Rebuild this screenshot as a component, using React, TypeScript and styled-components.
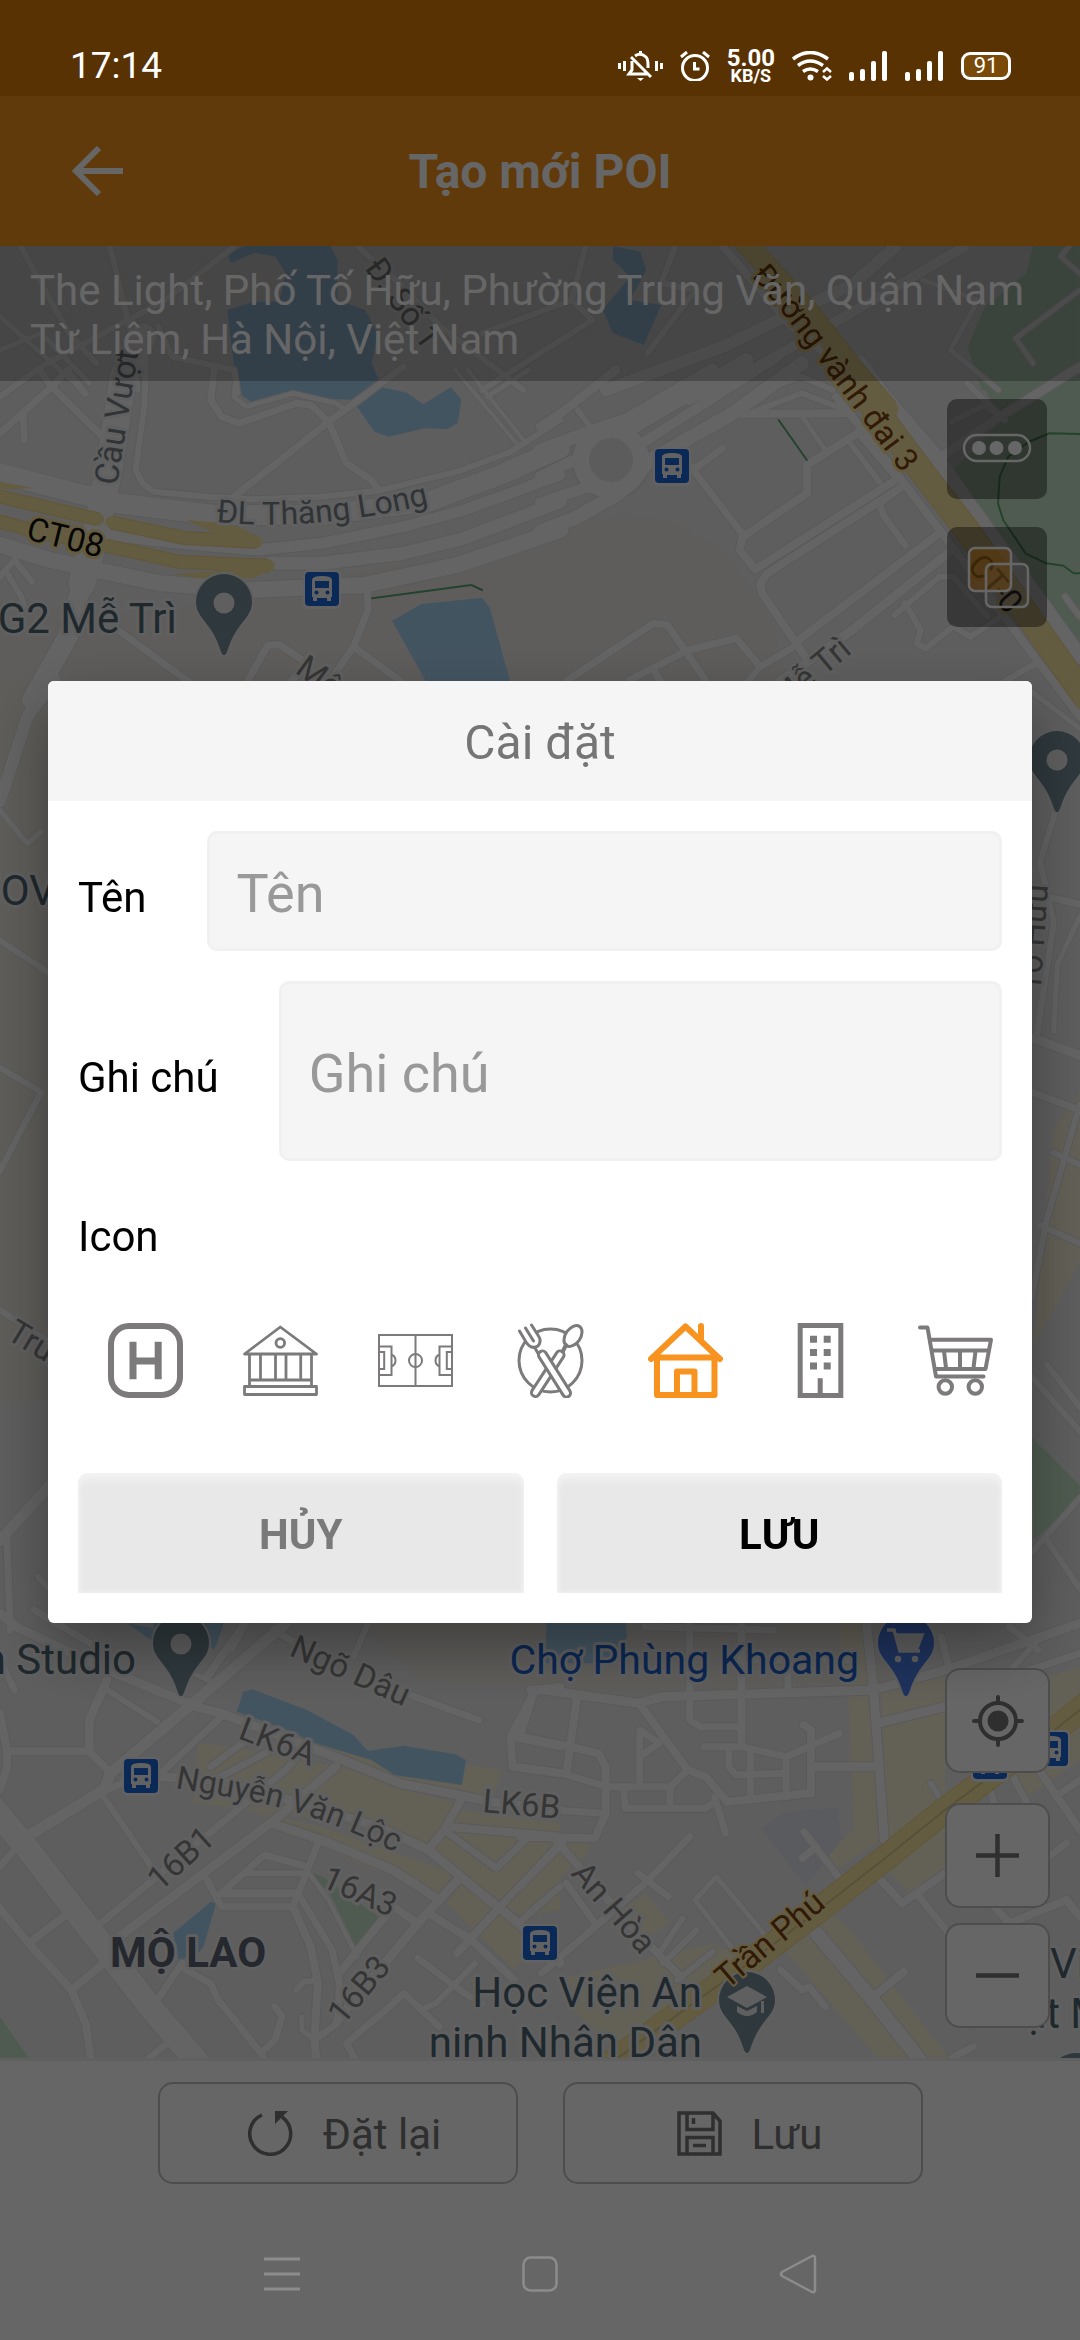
import React, { useState } from "react";
import styled, { createGlobalStyle } from "styled-components";

const GlobalStyle = createGlobalStyle`
  *, *::before, *::after { box-sizing: border-box; }
  body { margin: 0; background: #666; }
  body, button, input { font-family: Roboto, "Noto Sans", sans-serif; }
  button { margin: 0; padding: 0; border: 0; background: none; cursor: pointer; }
`;

const Page = styled.div`
  display: flex;
  flex-direction: column;
  min-height: 100vh;
`;

/* ---------- system status bar ---------- */

const StatusBar = styled.div`
  position: relative;
  z-index: 2;
  display: flex;
  justify-content: space-between;
  align-items: flex-end;
  height: 96px;
  padding: 0 69px 10px 70px;
  background: #593204;
  color: #fff;
`;

const Clock = styled.time`
  font-size: 37px;
  line-height: 40px;
`;

const StatusIcons = styled.div`
  display: flex;
  align-items: center;
  gap: 17px;
  height: 40px;
`;

const Speed = styled.div`
  display: flex;
  flex-direction: column;
  align-items: center;
  font-weight: 700;
  font-size: 24px;
  line-height: 20px;
`;

const SpeedUnit = styled.span`
  font-size: 18px;
  line-height: 16px;
`;

const Battery = styled.div`
  display: grid;
  place-items: center;
  width: 50px;
  height: 28px;
  border: 3px solid #fff;
  border-radius: 9px;
  background: #7a4a08;
  font-size: 22px;
  line-height: 22px;
`;

/* ---------- app bar ---------- */

const AppBar = styled.header`
  display: grid;
  grid-template-columns: 1fr auto 1fr;
  align-items: center;
  height: 150px;
  padding: 0 72px;
  background: #f0921a;
  color: #fff;
`;

const BackButton = styled.button`
  justify-self: start;
  display: flex;
  color: inherit;
`;

const Title = styled.h1`
  margin: 0;
  padding-top: 2px;
  font-size: 48px;
  line-height: 56px;
  font-weight: 700;
`;

/* ---------- map ---------- */

const MapArea = styled.main`
  position: relative;
  flex: 1;
  min-height: 1400px;
  overflow: hidden;
  background: #ececec;
`;

const MapCanvas = styled.svg`
  position: absolute;
  inset: 0;
  width: 100%;
  height: 100%;
`;

const Address = styled.p`
  position: relative;
  margin: 0;
  padding: 20px 30px 17px;
  background: rgba(0, 0, 0, 0.25);
  color: #fff;
  font-size: 42px;
  line-height: 49px;
`;

const MapTools = styled.div`
  position: absolute;
  top: 153px;
  right: 33px;
  display: flex;
  flex-direction: column;
  gap: 28px;
`;

const ToolButton = styled.button`
  display: flex;
  width: 100px;
  height: 100px;
  border-radius: 10px;
  background: rgba(0, 0, 0, 0.4);
`;

const MapControls = styled.div`
  position: absolute;
  right: 30px;
  bottom: 30px;
  display: flex;
  flex-direction: column;
  gap: 30px;
`;

const ZoomGroup = styled.div`
  display: flex;
  flex-direction: column;
  gap: 15px;
`;

const ControlButton = styled.button`
  display: grid;
  place-items: center;
  width: 105px;
  height: 105px;
  border: 2px solid #c0c0c0;
  border-radius: 15px;
  background: #fff;
  color: #757575;
`;

/* ---------- bottom bars ---------- */

const ActionBar = styled.footer`
  display: flex;
  justify-content: center;
  gap: 45px;
  padding: 21px 48px 24px;
  border-top: 3px solid #f0f0f0;
  background: #fff;
`;

const ActionButton = styled.button`
  display: flex;
  flex: 0 1 360px;
  justify-content: center;
  align-items: center;
  gap: 30px;
  height: 102px;
  padding-left: 14px;
  border: 2px solid #c0c0c0;
  border-radius: 15px;
  color: #757575;
  font-size: 42px;
  line-height: 50px;
`;

const ActionText = styled.span`
  padding-top: 3px;
`;

const NavBar = styled.nav`
  position: relative;
  z-index: 2;
  display: flex;
  justify-content: center;
  gap: 138px;
  height: 132px;
  background: #666;
  color: #8c8c8c;
`;

const NavButton = styled.button`
  display: grid;
  place-items: center;
  width: 120px;
  color: inherit;
`;

/* ---------- dialog ---------- */

const Backdrop = styled.div`
  position: fixed;
  inset: 0;
  z-index: 1;
  display: flex;
  align-items: center;
  padding: 96px 48px 132px;
  background: rgba(0, 0, 0, 0.6);
`;

const Dialog = styled.section`
  flex: 1;
  min-width: 0;
  overflow: hidden;
  border-radius: 6px;
  background: #fff;
  box-shadow: 0 24px 60px rgba(0, 0, 0, 0.35);
`;

const DialogTitle = styled.h2`
  margin: 0;
  padding: 34px 0 30px;
  background: #f5f5f5;
  color: #757575;
  font-size: 48px;
  line-height: 56px;
  font-weight: 400;
  text-align: center;
`;

const Form = styled.form`
  display: flex;
  flex-direction: column;
  gap: 30px;
  padding: 30px;
`;

const Field = styled.div`
  display: flex;
  align-items: baseline;
  gap: 60px;
`;

const FieldLabel = styled.label`
  color: #000;
  font-size: 42px;
  line-height: 50px;
`;

const TextInput = styled.input<{ $tall?: boolean }>`
  flex: 1;
  min-width: 0;
  height: ${(p) => (p.$tall ? 180 : 120)}px;
  padding: 4px 27px 0;
  border: 3px solid #f1f1f1;
  border-radius: 10px;
  outline: none;
  background: #f5f5f5;
  color: #333;
  font-size: 54px;
  &::placeholder { color: #999; opacity: 1; }
`;

const IconSection = styled.div`
  display: flex;
  flex-direction: column;
  gap: 31px;
  padding: 21px 0 15px;
`;

const IconHeading = styled.span`
  color: #000;
  font-size: 42px;
  line-height: 50px;
`;

const IconRow = styled.div`
  display: flex;
  overflow-x: auto;
  scrollbar-width: none;
`;

const IconOption = styled.label<{ $active: boolean }>`
  position: relative;
  flex: none;
  display: flex;
  padding: 30px;
  color: ${(p) => (p.$active ? "#f7931e" : "#7c7a7b")};
  cursor: pointer;
`;

const HiddenRadio = styled.input`
  position: absolute;
  inset: 0;
  width: 100%;
  height: 100%;
  margin: 0;
  opacity: 0;
`;

const DialogActions = styled.div`
  display: flex;
  gap: 33px;
`;

const DialogButton = styled.button<{ $primary?: boolean }>`
  flex: 1;
  height: 120px;
  padding-top: 2px;
  border-radius: 10px 10px 0 0;
  background: #e8e8e8;
  box-shadow: inset 0 8px 8px -2px #f3f3f3, inset 0 0 5px #f6f6f6;
  color: ${(p) => (p.$primary ? "#000" : "#7a7a7a")};
  font-size: 42px;
  font-weight: 700;
`;

/* ---------- map drawing ---------- */

type Tile = [number, number, number, number];
const NORTH: Tile = [0, 0, 1.452, 3];
const NW: Tile = [0, 370, 2.8, 3];
const NE: Tile = [540, 370, 2.904, 3];
const MID: Tile = [0, 680, 1.452, 1.6505];
const SW: Tile = [0, 1610, 2.8, 3];
const SE: Tile = [520, 1610, 2.8, 3];

const place = ([ox, oy, sx, sy]: Tile, pts: string) =>
  pts
    .split(" ")
    .map((p) => {
      const [x, y] = p.split(",").map(Number);
      return `${(ox + x / sx).toFixed(1)},${(oy + y / sy).toFixed(1)}`;
    })
    .join(" ");

type Shape = [Tile, string];
const water: Shape[] = [
  [NORTH, "355,738 480,738 490,780 490,900 530,930 548,1000 540,1090 550,1140 545,1165 520,1200 470,1197 430,1173 365,1205 345,1180 335,1020 330,930 370,905 405,905 415,820 400,770 370,758 335,790 330,760"],
  [NORTH, "890,738 930,755 938,810 915,900 960,915 935,1035 890,1000 875,930 915,830 890,780"],
  [NW, "1000,110 1070,52 1140,68 1185,103 1262,52 1292,88 1282,158 1252,178 1190,175 1088,200 1048,185"],
  [NW, "1098,752 1180,702 1350,683 1372,715 1430,940 1195,940"],
  [SW, "680,247 705,238 860,300 990,375 1030,423 1130,407 1275,433 1305,450 1293,525 1105,495 1040,450 860,392 830,370 663,305"],
  [SW, "355,40 430,95 430,30 630,30 600,120 560,80"],
  [SW, "485,970 590,875 605,880 570,1010 545,1040 500,1048"],
  [SE, "75,30 295,30 300,80 250,160 70,160"],
];
const parks: Shape[] = [
  [NORTH, "1500,738 1568,738 1568,1170 1425,1170 1405,1040 1430,920 1490,820"],
  [NORTH, "475,910 500,945 520,930 538,950 530,1000 490,1080 470,1000"],
  [NE, "1262,0 1568,0 1568,840 1200,300 1340,150"],
  [MID, "1498,1250 1568,1330 1568,1350 1500,1420"],
  [SW, "870,787 905,800 1060,920 1085,890 1000,1020 930,860"],
  [SW, "0,1220 80,1343 0,1343"],
];
const beige: Shape[] = [
  [SW, "555,400 650,410 830,450 960,470 1130,540 1290,580 1200,700 1000,640 540,580"],
  [SW, "860,392 1040,450 1105,495 1293,525 1305,465 1405,480 1380,560 1100,520 900,440"],
  [SW, "700,600 900,650 1270,790 1230,850 1000,760 800,650"],
  [SW, "1290,600 1568,640 1568,900 1460,920 1300,790 1200,720"],
  [SW, "1250,880 1300,810 1500,1000 1440,1080"],
  [SE, "890,40 960,40 1000,220 1010,690 860,800 870,720 935,660 920,260"],
  [SE, "1010,240 1190,200 1190,560 1030,690"],
  [SE, "1030,780 1190,650 1190,770 1090,850"],
  [SE, "740,1020 870,900 940,980 1200,1343 1000,1343"],
  [SE, "1480,200 1568,170 1568,450 1420,560 1380,500"],
  [SE, "0,700 200,700 180,740 0,900"],
  [SE, "280,900 350,850 420,940 360,980"],
  [SE, "100,1110 540,1000 640,1050 280,1330 150,1200"],
  [MID, "1530,740 1568,680 1568,960 1500,1100"],
];

type Road = [Tile, number, string];
const roads: Road[] = [
  [NORTH, 6, "30,740 100,1000 140,1090"], [NORTH, 6, "160,740 190,1000 200,1170"],
  [NORTH, 5, "0,950 120,1170"], [NORTH, 5, "0,1050 60,1000 130,1150"],
  [NORTH, 6, "340,740 240,900 60,1100 0,1190"], [NORTH, 6, "230,980 250,1070 340,1110 345,1180"],
  [NORTH, 6, "520,740 580,850 640,980 760,1170"], [NORTH, 6, "850,740 830,900 700,1000"],
  [NORTH, 6, "830,900 860,960 700,1170"], [NORTH, 6, "980,740 960,850 1010,870 940,1060"],
  [NORTH, 12, "1300,740 1240,850 1050,1040 880,1170"], [NORTH, 10, "1400,740 1310,850 1100,1100 1000,1200"],
  [NORTH, 8, "1050,740 1150,980 1300,1230"], [NORTH, 5, "1340,840 1420,900 1380,1050 1450,1170"],
  [NORTH, 5, "1568,700 1540,770 1568,820"], [NORTH, 5, "1568,870 1475,1015 1500,1090"],
  [NW, 7, "0,190 145,50 190,0"], [NW, 7, "145,50 330,245"], [NW, 7, "65,130 68,210"],
  [NW, 7, "145,50 110,0"], [NW, 7, "190,5 238,70"],
  [NW, 27, "400,-100 345,20 305,300 270,480 230,640"], [NW, 20, "240,600 190,800 90,990"],
  [NW, 6, "410,-100 405,100 380,300 400,340 430,365 580,380 700,388 900,380 1060,362 1280,305 1430,245 1568,150"],
  [NW, 7, "600,0 590,90 620,140 670,160 830,100 870,105 920,155 970,280 1040,330 1060,360"],
  [NW, 7, "650,385 920,155 1130,-10"], [NW, 5, "660,30 655,80 690,110 820,70 940,100 960,115"],
  [NW, 4, "1275,0 1450,225"], [NW, 4, "1310,0 1470,215"], [NW, 5, "1365,80 1480,0"],
  [NW, 20, "0,310 215,370 330,400 600,435 900,435 1200,395 1400,315 1568,235"],
  [NW, 11, "260,490 500,520 720,540 900,520 1130,470 1300,420 1568,315"],
  [NW, 13, "755,580 900,580 1130,550 1300,505 1568,395"],
  [NW, 16, "0,525 140,570 270,600 450,640 700,660 1020,645 1280,585 1568,480"],
  [NW, 10, "280,395 400,420 640,450"],
  [NW, 7, "1028,650 1030,720 990,830 920,940"], [NW, 7, "990,830 1130,940"],
  [NW, 7, "330,780 560,960"], [NW, 7, "690,940 750,825 785,825 860,880"], [NW, 7, "810,940 860,880"],
  [NW, 6, "0,620 40,570 90,635"], [NW, 6, "20,610 60,680 70,720"],
  [NE, 13, "0,240 120,195 250,150 500,0"], [NE, 9, "0,170 60,130 110,90 220,0"],
  [NE, 6, "110,120 160,190"], [NE, 11, "0,320 120,260"], [NE, 11, "0,400 140,350 200,370"],
  [NE, 14, "0,485 100,445 230,370 320,270 560,130 760,-20"], [NE, 14, "240,190 600,-30"],
  [NE, 10, "280,230 690,-40"], [NE, 8, "590,132 890,130"], [NE, 6, "620,125 760,70 900,125 1040,320"],
  [NE, 6, "640,60 760,20 850,60"],
  [NE, 7, "445,300 530,235"], [NE, 7, "430,280 590,495"], [NE, 8, "590,500 775,370 775,285 930,185"],
  [NE, 5, "765,145 825,235"], [NE, 8, "590,490 580,540 625,598 1040,325"],
  [NE, 8, "1060,345 660,610 640,640 645,670 770,860"], [NE, 8, "745,815 1160,490"],
  [NE, 6, "905,225 985,335"], [NE, 5, "930,200 1030,320"], [NE, 7, "1060,525 1000,440 985,400 1060,345"],
  [NE, 8, "860,80 1050,330 1190,520 1450,880 1568,1040"],
  [NE, 15, "930,-20 1000,80 1150,260 1250,410 1470,720 1568,860"],
  [NE, 9, "1160,265 1290,170 1568,-10"], [NE, 6, "1195,155 1290,105 1350,150"], [NE, 6, "1240,40 1350,150"],
  [NE, 9, "690,940 900,785 1190,545"], [NE, 6, "1030,735 1160,620 1200,620 1300,740"],
  [NE, 6, "1060,700 1105,780 1095,820 1120,835 1200,770 1250,800 1340,740"],
  [NE, 6, "1340,940 1440,880"], [NE, 7, "80,930 330,760 370,765 480,930"],
  [NE, 7, "260,930 430,840 570,805 640,890 730,835"], [NE, 7, "330,900 360,950"], [NE, 6, "640,890 600,940"],
  [NE, 6, "1525,680 1568,740"],
  [MID, 12, "80,0 40,60 0,200"], [MID, 6, "0,430 80,490"], [MID, 6, "0,640 60,680 0,810"],
  [MID, 5, "0,215 40,270 60,250"], [MID, 11, "80,1320 0,1420"], [MID, 6, "0,1040 80,1100"],
  [MID, 6, "55,1480 80,1510"], [MID, 7, "10,1420 15,1568"],
  [MID, 5, "1498,20 1568,80"], [MID, 6, "1540,190 1510,300 1530,400 1505,590"],
  [MID, 9, "1498,590 1568,620"], [MID, 7, "1490,350 1568,370"], [MID, 7, "1498,680 1568,710"],
  [MID, 6, "1530,780 1568,800"], [MID, 5, "1568,390 1535,470 1530,580"],
  [MID, 6, "1498,1020 1520,890 1568,700"], [MID, 6, "1498,1150 1568,1240"], [MID, 6, "1520,1130 1568,1200"],
  [MID, 6, "1510,900 1568,930"], [MID, 6, "1498,1440 1568,1350"], [MID, 6, "1520,1420 1568,1500"],
  [SW, 24, "-30,580 80,720 260,970 420,1190 580,1390"],
  [SW, 11, "75,680 290,540 310,490 540,280 800,40"],
  [SW, 8, "0,310 20,424 250,424 310,490"], [SW, 8, "20,424 20,470 0,540"],
  [SW, 9, "250,424 250,330 300,210"], [SW, 9, "0,10 45,50 300,180 540,285"], [SW, 7, "0,150 40,240"],
  [SW, 6, "300,240 440,335"], [SW, 7, "95,0 300,130"], [SW, 5, "540,190 600,220"],
  [SW, 8, "580,200 700,20"], [SW, 5, "650,120 690,40"],
  [SW, 9, "530,285 620,310 960,450 1120,520 1400,580 1568,600"], [SW, 7, "450,490 620,320"],
  [SW, 6, "290,560 430,780"], [SW, 7, "300,540 360,510"], [SW, 7, "270,950 800,480 840,430"],
  [SW, 9, "310,1000 780,620 940,470"], [SW, 7, "590,470 690,390"], [SW, 7, "600,510 760,420"],
  [SW, 8, "80,1000 190,910"], [SW, 8, "-20,870 80,1000 200,1140 240,1240 260,1390"],
  [SW, 8, "200,1140 290,1060"], [SW, 7, "0,770 40,720"], [SW, 7, "400,1360 490,1280"], [SW, 7, "440,1170 510,1060"],
  [SW, 9, "760,640 900,690 1100,780 1230,870"],
  [SW, 9, "450,500 600,510 750,550 1060,650 1200,720 1290,800 1450,940 1568,1060"],
  [SW, 8, "1200,720 1250,650 1290,570"], [SW, 8, "1250,650 1568,680"],
  [SW, 7, "1250,665 1390,775 1480,680"], [SW, 7, "1400,890 1568,700"], [SW, 7, "1450,940 1568,830"],
  [SW, 7, "580,810 620,890 820,890 850,810 890,700"], [SW, 8, "620,850 830,850"],
  [SW, 7, "630,840 740,735 860,770"], [SW, 6, "690,790 850,790"],
  [SW, 8, "820,890 870,1010 890,1120 880,1290 890,1390"],
  [SW, 7, "840,860 930,1020 950,1120 945,1240 880,1290"], [SW, 5, "865,790 920,870 1000,1040"],
  [SW, 8, "950,1090 1100,890 1170,940"], [SW, 9, "1290,800 1170,940 945,1230"],
  [SW, 7, "1230,1250 1130,1150 1080,1200 970,1300 1000,1360"], [SW, 7, "1170,1045 1300,1150 1350,1180"],
  [SW, 8, "1200,910 1320,990 1440,1110"], [SW, 8, "1280,1030 1400,890"], [SW, 6, "1180,1200 1220,1180 1330,1060"],
  [SW, 7, "520,1080 590,1120 610,1170 650,1220 730,1330"],
  [SW, 7, "770,1190 790,1220 770,1290 730,1330 760,1390"], [SW, 6, "830,1140 850,1115 890,1110"],
  [SW, 5, "845,1220 845,1260 870,1280"], [SW, 7, "1110,240 1340,330"], [SW, 7, "765,60 830,100"],
  [SW, 6, "1030,40 990,140"], [SW, 8, "1568,230 1500,240 1430,380 1435,470 1568,490"], [SW, 7, "1430,380 1568,410"],
  [SE, 9, "30,240 70,240 330,280 400,260 990,240 1190,180 1568,40"], [SE, 9, "1000,340 1190,290"],
  [SE, 8, "40,240 0,380"], [SE, 8, "160,260 130,490"],
  [SE, 8, "0,380 140,410 220,430 240,470 240,610 210,685 0,680"], [SE, 7, "0,470 120,490 240,530 420,530 470,480"],
  [SE, 8, "340,290 470,480 520,500 580,575 810,550"], [SE, 7, "335,530 335,360 390,400 335,440"],
  [SE, 7, "475,40 475,330 505,350 610,350"], [SE, 8, "620,40 620,410"],
  [SE, 7, "515,410 620,410 745,440 895,370"], [SE, 8, "795,345 815,360 815,550"],
  [SE, 7, "585,420 585,470 605,495 740,490"], [SE, 7, "645,420 645,570"], [SE, 7, "745,440 745,560"],
  [SE, 9, "820,470 1000,470"], [SE, 9, "970,40 990,240 1020,690"],
  [SE, 7, "290,530 295,595 520,595 545,575"], [SE, 7, "420,530 420,590"], [SE, 7, "545,560 575,670"],
  [SE, 7, "85,600 240,610"], [SE, 7, "350,50 710,60"], [SE, 7, "750,230 750,160"], [SE, 7, "620,150 940,150"],
  [SE, 7, "330,790 415,860"], [SE, 7, "475,680 360,810 200,960 60,1090"],
  [SE, 8, "100,690 320,960 450,1100"], [SE, 7, "130,820 210,940"], [SE, 6, "390,1030 455,925"],
  [SE, 6, "400,1060 495,960"], [SE, 6, "440,1110 540,1025"], [SE, 7, "120,700 0,830"],
  [SE, 5, "620,1050 490,870 550,800 690,980"], [SE, 7, "795,665 890,800"], [SE, 7, "790,745 830,710"],
  [SE, 7, "730,1080 790,1140 810,1130 855,1190"], [SE, 14, "830,970 980,1160 1120,1350"],
  [SE, 8, "990,1160 1075,1085"], [SE, 8, "1010,810 1070,880 1190,790"], [SE, 7, "1110,850 1200,970"],
  [SE, 7, "1380,500 1420,580"], [SE, 7, "1310,510 1330,590"], [SE, 8, "1460,490 1568,660"],
  [SE, 7, "1500,560 1568,510"], [SE, 8, "1320,880 1370,940 1530,870 1568,920"], [SE, 7, "1480,740 1530,700"],
  [SE, 7, "1210,1343 1270,1310"], [SE, 7, "1370,50 1450,120"], [SE, 7, "1180,80 1200,170"],
  [SE, 7, "1370,200 1568,130"], [SE, 6, "1150,520 1180,570"], [SE, 6, "1340,220 1450,90"],
];
const highways: Road[] = [
  [NORTH, 22, "1070,700 1180,950 1240,1110 1290,1230"],
  [NE, 26, "860,-40 905,25 1120,320 1240,480 1590,990"],
  [NW, 14, "-20,375 275,448"], [NW, 14, "312,457 510,503 718,516"],
  [NW, 14, "-20,450 80,478 240,515"], [NW, 14, "295,527 500,575 752,587"],
  [SE, 26, "240,1370 640,1060 830,905 1010,755 1190,600 1340,480 1480,375 1590,280"],
];

const POI = "#4f6672";
const STREET = "#868685";
const AVENUE = "#79838b";
const BROWN = "#7c4110";

const halo = {
  stroke: "#efefef",
  strokeWidth: 6,
  strokeLinejoin: "round" as const,
  paintOrder: "stroke",
};

const Label = ({ x, y, r = 0, fill = STREET, size = 33, children, ...rest }: any) => (
  <text {...halo} transform={`translate(${x} ${y}) rotate(${r})`} fill={fill} fontSize={size} {...rest}>
    {children}
  </text>
);

const Bus = ({ x, y }: { x: number; y: number }) => (
  <g transform={`translate(${x} ${y})`}>
    <rect x="-2" y="-2" width="38" height="39" rx="5" fill="#f5f5f5" />
    <rect width="34" height="34" rx="4" fill="#1a68d8" />
    <path d="M7 8q0-4 10-4t10 4v17h-1v4h-4v-3H12v3H8v-4H7Z" fill="#f5f5f5" />
    <path d="M10 9h14v7H10Z" fill="#1a68d8" />
    <circle cx="11.500" cy="20.500" r="2" fill="#1a68d8" />
    <circle cx="22.500" cy="20.500" r="2" fill="#1a68d8" />
  </g>
);

const Pin = ({ x, y, fill = "#768d99", children }: any) => (
  <g transform={`translate(${x} ${y})`}>
    <path
      d="M0 0c-4 0-3-10-13-25C-20-36-28-41-28-53a28 28 0 0 1 56 0c0 12-8 17-15 28C3-10 4 0 0 0Z"
      fill={fill}
      stroke="#ededed"
      strokeWidth="4"
      paintOrder="stroke"
    />
    {children ?? <circle cy="-52" r="10.500" fill="#ededed" />}
  </g>
);

const TownMap = () => (
  <MapCanvas viewBox="0 246 1080 1812" preserveAspectRatio="xMidYMin slice" aria-hidden="true" fontFamily="Roboto, 'Noto Sans', sans-serif">
    <rect y="246" width="1080" height="1812" fill="#ebebeb" />
    <path d="M0 600C200 640 300 560 480 560 640 470 720 530 760 600S780 700 760 720H0Z" fill="#ebe8e4" />
    <path d="M0 680H60V1400H0Z" fill="#ebe8e0" />
    <path d="M350 1615H900V1700L600 1690 420 1680Z" fill="#ece9e2" />
    {parks.map(([t, p], i) => <polygon key={i} points={place(t, p)} fill="#c6e4c8" />)}
    {beige.map(([t, p], i) => <polygon key={i} points={place(t, p)} fill="#f7efd8" />)}
    <polygon points={place(SE, "675,655 740,605 890,592 900,690 800,830")} fill="#e2e4ea" />
    {water.map(([t, p], i) => <polygon key={i} points={place(t, p)} fill="#a9d3f3" />)}
    <g fill="none" strokeLinejoin="round" strokeLinecap="round">
      {roads.map(([t, w, p], i) => <polyline key={i} points={place(t, p)} stroke="#dfdfdf" strokeWidth={w + 2} />)}
      <circle cx="611" cy="460" r="31" stroke="#dfdfdf" strokeWidth="18" />
      {roads.map(([t, w, p], i) => <polyline key={i} points={place(t, p)} stroke="#fafafa" strokeWidth={w} />)}
      <circle cx="611" cy="460" r="30" stroke="#fafafa" strokeWidth="16" fill="#e6e6e6" />
      <g stroke="#efd68c" strokeLinecap="butt">
        {highways.map(([t, w, p], i) => <polyline key={i} points={place(t, p)} strokeWidth={w} />)}
      </g>
      <g stroke="#fae6a0">
        {highways.map(([t, w, p], i) => <polyline key={i} points={place(t, p)} strokeWidth={w - 2} />)}
      </g>
      <polyline points={place(SE, highways[6][2])} stroke="#d9c890" strokeWidth="2" />
      <g stroke="#5aa870" strokeWidth="2">
        <polyline points={place(NW, "1042,685 1320,645 1350,660")} />
        <polyline points={place(NE, "693,150 775,270")} />
        <polyline points={place(NE, "1568,192 1480,190 1420,215 1360,260 1335,320 1330,400 1345,450 1410,550 1470,580 1520,587 1550,610 1568,610")} />
      </g>
    </g>
    <g fill="#fae6a0">
      <polygon points={place(NW, "520,450 640,460 690,480 735,515 600,490")} />
      <polygon points={place(NW, "480,612 640,600 770,590 710,625 560,625")} />
      <polygon points={place(NW, "0,335 100,355 0,358")} />
    </g>

    <defs>
      <path id="ringRoad" d="M751 276C800 330 835 385 915 490" />
      <path id="thangLong" d="M216 522Q320 533 450 499" />
      <path id="vanLoc" d="M175 1788C240 1800 300 1802 410 1860" />
    </defs>
    <Bus x={305} y={572} />
    <Bus x={655} y={449} />
    <Bus x={124} y={1759} />
    <Bus x={523} y={1926} />
    <Bus x={1034} y={1732} />
    <Bus x={973} y={1745} />

    <Label x={364} y={268} r={54}>Đ. Số 1</Label>
    <text {...halo} stroke="#fae6a0" fontSize="32" fill={BROWN}>
      <textPath href="#ringRoad">Đường vành đai 3</textPath>
    </text>
    <Label x={117} y={486} r={-81} fill={AVENUE}>Cầu Vượt</Label>
    <Label x={25} y={539} r={14} fill="#111" stroke="#fae6a0">CT08</Label>
    <Label x={966} y={566} r={50} fill="#111" stroke="#fae6a0">CT-0</Label>
    <text {...halo} fontSize="32" fill={AVENUE}>
      <textPath href="#thangLong">ĐL Thăng Long</textPath>
    </text>
    <Label x={177} y={633} size={42} fill={POI} textAnchor="end">G2 Mễ Trì</Label>
    <Label x={294} y={672} r={36}>Mô</Label>
    <Label x={853} y={652} r={-40} textAnchor="end">Mễ Trì</Label>
    <Label x={56} y={905} size={42} fill={POI} textAnchor="end">/OV</Label>
    <Label x={5} y={1338} r={31}>Trung Văn</Label>
    <Label x={1048} y={885} r={-86} textAnchor="end">Tố Hữu</Label>
    <Label x={136} y={1674} size={42} fill={POI} textAnchor="end">n Studio</Label>
    <Label x={288} y={1655} r={24}>Ngõ Dâu</Label>
    <Label x={237} y={1738} r={21}>LK6A</Label>
    <text {...halo} fontSize="32" fill={STREET}>
      <textPath href="#vanLoc">Nguyễn Văn Lộc</textPath>
    </text>
    <Label x={482} y={1812} r={5}>LK6B</Label>
    <Label x={160} y={1892} r={-42}>16B1</Label>
    <Label x={320} y={1886} r={24}>16A3</Label>
    <Label x={343} y={2026} r={-50}>16B3</Label>
    <Label x={110} y={1967} size={42} fill="#5c6574" fontWeight="700">MỘ LAO</Label>
    <Label x={859} y={1674} size={41} fill="#1c62cf" textAnchor="end">Chợ Phùng Khoang</Label>
    <Label x={570} y={1874} r={49}>An Hòa</Label>
    <Label x={702} y={2007} size={42} fill={POI} textAnchor="end">Học Viện An</Label>
    <Label x={702} y={2057} size={42} fill={POI} textAnchor="end">ninh Nhân Dân</Label>
    <Label x={1050} y={1978} size={42} fill={POI}>Viện</Label>
    <Label x={952} y={2028} size={42} fill={POI}>Thuật Mật</Label>

    <Pin x={224} y={655} />
    <Pin x={1057} y={812} />
    <Pin x={181} y={1696} />
    <Pin x={1076} y={2134} />
    <Pin x={906} y={1696} fill="#4a7ee8">
      <g fill="none" stroke="#ededed" strokeWidth="3.500">
        <path d="M-19-66h7l6 21h20M-10-61h26l-5 13h-17" />
        <path d="M-9-60h24l-4 11H-6Z" fill="#ededed" />
        <circle cx="-8" cy="-37" r="1.500" />
        <circle cx="9" cy="-37" r="1.500" />
      </g>
    </Pin>
    <Pin x={747} y={2053}>
      <path d="M0-67 20-56 0-45-20-56ZM-10-47v6q10 8 20 0v-6L0-42ZM14-52h3v12h-3Z" fill="#ededed" />
    </Pin>
    <Label x={727} y={1990} r={-40} fill={BROWN} stroke="#fae6a0" strokeWidth={4}>Trần Phú</Label>
  </MapCanvas>
);

/* ---------- icons ---------- */

const HospitalIcon = () => (
  <svg width="75" height="75" viewBox="0 0 75 75" fill="none" stroke="currentColor" strokeWidth="6">
    <rect x="3" y="3" width="69" height="69" rx="18" />
    <path d="M25 18.700v37.600M50.200 18.700v37.600M25 38h25" strokeWidth="7" />
  </svg>
);

const BankIcon = () => (
  <svg width="75" height="75" viewBox="0 0 75 75" fill="none" stroke="currentColor" strokeWidth="2.800" strokeLinejoin="round">
    <path d="M1.500 31 37.300 4 73.500 31Z" />
    <circle cx="37.300" cy="20" r="4.300" />
    <path d="M6.500 31v32M68.500 31v32M17.500 31v26M32.500 31v26M43 31v26M57.700 31v26M6.500 57h62" />
    <path d="M1.500 63.500h72v8h-72Z" />
  </svg>
);

const PitchIcon = () => (
  <svg width="75" height="75" viewBox="0 0 75 75" fill="none" stroke="currentColor" strokeWidth="2">
    <path d="M1 12h73v51H1ZM37.500 12v51" />
    <circle cx="37.500" cy="37.500" r="6.500" />
    <path d="M2 23.500h11.500v28.500H2M2 29h4.200v17H2M13.500 31.500a6.500 6.500 0 0 1 0 12" />
    <path d="M73 23.500H61.500v28.500H73M73 29h-4.200v17H73M61.500 31.500a6.500 6.500 0 0 0 0 12" />
  </svg>
);

const RestaurantIcon = () => (
  <svg width="75" height="75" viewBox="0 0 75 75" fill="none" stroke="currentColor" strokeWidth="3" strokeLinecap="round">
    <circle cx="37.500" cy="37.500" r="31.500" />
    <ellipse cx="60" cy="13" rx="7.500" ry="11.500" transform="rotate(35 60 13)" fill="#fff" />
    <path d="m53 22-4 8" strokeWidth="4" />
    <path d="M47 32 22.500 69.500" strokeWidth="11" />
    <path d="M47 32 22.500 69.500" strokeWidth="5" stroke="#fff" />
    <path d="M7 8 13 19Q19 26 25 22 28 18 25 14L18.500 2Z" fill="#fff" stroke="none" />
    <path d="m6.500 8 6.500 11q5 8 12 4 4-5 .500-10L18.500 2M12.500 5l8 13M22 25l4 7" />
    <path d="m29.500 32 24 38" strokeWidth="11" />
    <path d="m29.500 32 24 38" strokeWidth="5" stroke="#fff" />
  </svg>
);

const HouseIcon = () => (
  <svg width="75" height="75" viewBox="0 0 75 75" fill="none" stroke="currentColor" strokeWidth="6" strokeLinecap="round" strokeLinejoin="round">
    <path d="M3 36 37.500 3.500 72 36M8 34.500h59M53 3v15M9 36v36h57.500V36M29 71V48.500h17.500V71" />
  </svg>
);

const BuildingIcon = () => (
  <svg width="75" height="75" viewBox="0 0 75 75" fill="currentColor">
    <path d="M14.700 0h45.600v75H14.700ZM19.700 5v65h15V55.300h5V70h15.600V5Z" fillRule="evenodd" />
    <path d="M27 12.700h7v7h-7ZM40.700 12.700h7v7h-7ZM27 26h7v7h-7ZM40.700 26h7v7h-7ZM27 39.500h7v7h-7ZM40.700 39.500h7v7h-7Z" />
  </svg>
);

const CartIcon = () => (
  <svg width="75" height="75" viewBox="0 0 75 75" fill="none" stroke="currentColor" strokeWidth="4" strokeLinecap="round" strokeLinejoin="round">
    <path d="M2 4.500h7.500L18 53.500h47.500M13 16.700h60L67.500 46H18M15 27.500h55M26 28l2 17M42 28v17M57.500 28l-2 17" />
    <circle cx="27.300" cy="64" r="6.700" />
    <circle cx="57.300" cy="64" r="6.700" />
  </svg>
);

const SignalIcon = () => (
  <svg width="39" height="30" viewBox="0 0 39 30" fill="currentColor">
    <rect y="21" width="5" height="9" rx="2" />
    <rect x="11" y="18" width="5" height="12" rx="2" />
    <rect x="22" y="10" width="5" height="20" rx="2" />
    <rect x="33" width="5" height="30" rx="2" />
  </svg>
);

const choices = [
  { id: "hospital", name: "Bệnh viện", Icon: HospitalIcon },
  { id: "bank", name: "Ngân hàng", Icon: BankIcon },
  { id: "pitch", name: "Sân bóng", Icon: PitchIcon },
  { id: "food", name: "Nhà hàng", Icon: RestaurantIcon },
  { id: "house", name: "Nhà", Icon: HouseIcon },
  { id: "building", name: "Tòa nhà", Icon: BuildingIcon },
  { id: "shop", name: "Siêu thị", Icon: CartIcon },
];

export default function App() {
  const [picked, setPicked] = useState("house");

  return (
    <Page>
      <GlobalStyle />
      <StatusBar>
        <Clock>17:14</Clock>
        <StatusIcons>
          <svg width="45" height="30" viewBox="0 0 45 30" fill="none" stroke="currentColor" strokeWidth="3">
            <path d="M1.500 12v6M6.500 10v10M38.500 10v10M43.500 12v6" />
            <path d="M22.500 0v3M17 5q5.500-4 11 1 2 2 2 8v3M14 10v9l-3 4h19M13 6l20 20" />
            <path d="M19 27h7l-3.500 3Z" fill="currentColor" stroke="none" />
          </svg>
          <svg width="30" height="30" viewBox="0 0 30 30" fill="none" stroke="currentColor" strokeWidth="3">
            <circle cx="15" cy="17" r="12.500" />
            <path d="M14.500 11v7h5M1 6l6-5M29 6l-6-5" />
          </svg>
          <Speed>
            5.00
            <SpeedUnit>KB/S</SpeedUnit>
          </Speed>
          <svg width="40" height="30" viewBox="0 0 40 30" fill="none" stroke="currentColor" strokeWidth="3.500">
            <path d="M1 8q17-13 35 0M6 14.500q12-9 25 0M11 20.500q7-5 15 0" />
            <circle cx="18.500" cy="26.500" r="3" fill="currentColor" stroke="none" />
            <path d="m31 21 4-3.500 4 3.500M31 25l4 3.500 4-3.500" strokeWidth="2.500" />
          </svg>
          <SignalIcon />
          <SignalIcon />
          <Battery>91</Battery>
        </StatusIcons>
      </StatusBar>

      <AppBar>
        <BackButton aria-label="Quay lại">
          <svg width="51" height="50" viewBox="0 0 51 50" fill="none" stroke="currentColor" strokeWidth="6">
            <path d="M51 25H5M27 2 4 25l23 23" />
          </svg>
        </BackButton>
        <Title>Tạo mới POI</Title>
      </AppBar>

      <MapArea>
        <TownMap />
        <Address>The Light, Phố Tố Hữu, Phường Trung Văn, Quận Nam Từ Liêm, Hà Nội, Việt Nam</Address>
        <MapTools>
          <ToolButton aria-label="Thêm">
            <svg width="100" height="100" viewBox="0 0 100 100" fill="none" stroke="#fff" strokeWidth="2.500">
              <rect x="17" y="36" width="66" height="26" rx="13" />
              <g fill="#fff" stroke="none">
                <circle cx="32" cy="49" r="7" />
                <circle cx="49.500" cy="49" r="7" />
                <circle cx="68" cy="49" r="7" />
              </g>
            </svg>
          </ToolButton>
          <ToolButton aria-label="Lớp bản đồ">
            <svg width="100" height="100" viewBox="0 0 100 100" stroke="#fff" strokeWidth="2.500">
              <rect x="22" y="21" width="42" height="43" rx="6" fill="#f0921a" fillOpacity="0.6" />
              <rect x="39" y="37" width="42" height="43" rx="6" fill="#fff" fillOpacity="0.1" />
            </svg>
          </ToolButton>
        </MapTools>
        <MapControls>
          <ControlButton aria-label="Vị trí của tôi">
            <svg width="54" height="54" viewBox="0 0 54 54" fill="none" stroke="currentColor" strokeWidth="4">
              <circle cx="27" cy="27" r="18" />
              <circle cx="27" cy="27" r="10.500" fill="currentColor" stroke="none" />
              <path d="M27 3v6M27 45v6M3 27h6M45 27h6" strokeLinecap="round" />
            </svg>
          </ControlButton>
          <ZoomGroup>
            <ControlButton aria-label="Phóng to">
              <svg width="43" height="43" viewBox="0 0 43 43" stroke="currentColor" strokeWidth="4.500">
                <path d="M21.500 0v43M0 21.500h43" />
              </svg>
            </ControlButton>
            <ControlButton aria-label="Thu nhỏ">
              <svg width="43" height="43" viewBox="0 0 43 43" stroke="currentColor" strokeWidth="4.500">
                <path d="M0 21.500h43" />
              </svg>
            </ControlButton>
          </ZoomGroup>
        </MapControls>
      </MapArea>

      <ActionBar>
        <ActionButton>
          <svg width="45" height="45" viewBox="0 0 45 45" fill="none" stroke="currentColor" strokeWidth="3.500">
            <path d="M14 4a20.500 20.500 0 1 0 20 2" />
            <path d="M27 0h13L34 6l-7 7Z" fill="currentColor" stroke="none" />
          </svg>
          <ActionText>Đặt lại</ActionText>
        </ActionButton>
        <ActionButton>
          <svg width="45" height="45" viewBox="0 0 45 45" fill="none" stroke="currentColor" strokeWidth="3.500">
            <path d="M2 2h34l7 8v33H2ZM10 2v16.500h26V3M10 43V26.500h26V43M16 34.500h13" />
            <path d="M16.500 7v6" />
          </svg>
          <ActionText>Lưu</ActionText>
        </ActionButton>
      </ActionBar>

      <NavBar>
        <NavButton aria-label="Ứng dụng gần đây">
          <svg width="36" height="36" viewBox="0 0 36 36" stroke="currentColor" strokeWidth="3">
            <path d="M0 3h36M0 18h36M0 33h36" />
          </svg>
        </NavButton>
        <NavButton aria-label="Màn hình chính">
          <svg width="36" height="36" viewBox="0 0 36 36" fill="none" stroke="currentColor" strokeWidth="2.500">
            <rect x="1.500" y="1.500" width="33" height="33" rx="7" />
          </svg>
        </NavButton>
        <NavButton aria-label="Trở về">
          <svg width="38" height="40" viewBox="0 0 38 40" fill="none" stroke="currentColor" strokeWidth="2.500" strokeLinejoin="round">
            <path d="M36 4v32q0 3-3 2L3 22q-2-2 0-4L33 2q3-1 3 2Z" />
          </svg>
        </NavButton>
      </NavBar>

      <Backdrop>
        <Dialog role="dialog" aria-modal="true" aria-labelledby="dialog-title">
          <DialogTitle id="dialog-title">Cài đặt</DialogTitle>
          <Form onSubmit={(e) => e.preventDefault()}>
            <Field>
              <FieldLabel htmlFor="poi-name">Tên</FieldLabel>
              <TextInput id="poi-name" type="text" placeholder="Tên" />
            </Field>
            <Field>
              <FieldLabel htmlFor="poi-note">Ghi chú</FieldLabel>
              <TextInput id="poi-note" type="text" placeholder="Ghi chú" $tall />
            </Field>
            <IconSection>
              <IconHeading id="icon-heading">Icon</IconHeading>
              <IconRow role="radiogroup" aria-labelledby="icon-heading">
                {choices.map(({ id, name, Icon }) => (
                  <IconOption key={id} $active={picked === id}>
                    <HiddenRadio
                      type="radio"
                      name="poi-icon"
                      aria-label={name}
                      checked={picked === id}
                      onChange={() => setPicked(id)}
                    />
                    <Icon />
                  </IconOption>
                ))}
              </IconRow>
            </IconSection>
            <DialogActions>
              <DialogButton type="button">HỦY</DialogButton>
              <DialogButton type="submit" $primary>LƯU</DialogButton>
            </DialogActions>
          </Form>
        </Dialog>
      </Backdrop>
    </Page>
  );
}
